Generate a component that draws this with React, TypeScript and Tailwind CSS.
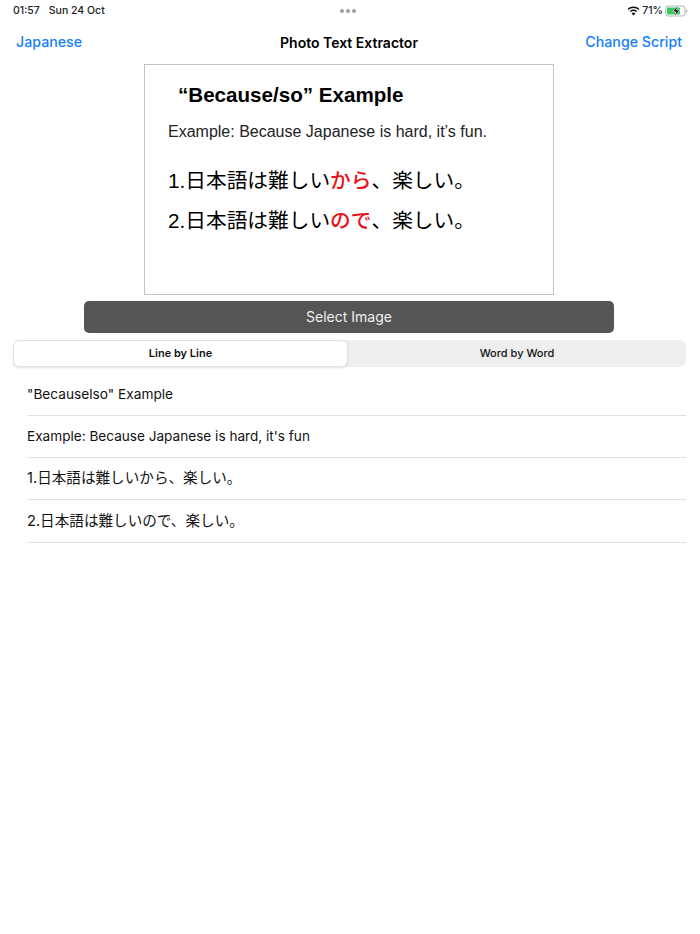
const sans = "font-['Inter','Noto_Sans_CJK_JP',sans-serif]";

function BatteryIcon() {
	return (
		<svg width="23" height="12" viewBox="0 0 23 12">
			<rect x="0.5" y="1" width="19.500" height="10" rx="2.500" fill="none" stroke="#b4b4b4" strokeWidth="1" />
			<rect x="2" y="2.500" width="13" height="7" rx="1" fill="#34c759" />
			<path d="M21 4.300c1 .3 1.500 1 1.500 1.700s-.5 1.400-1.500 1.700z" fill="#b4b4b4" />
			<path d="M12.600 0.600 7.600 6.800h3.200l-1.200 4.600 5.200-6.400h-3.200z" fill="#111" stroke="#fff" strokeWidth="0.600" />
		</svg>
	);
}

function WifiIcon() {
	return (
		<svg width="13" height="10" viewBox="0 0 13 10">
			<path d="M6.500 2.100c1.800 0 3.500.7 4.800 1.900l1-1.100C10.700 1.400 8.700.6 6.500.6S2.300 1.400.7 2.900l1 1.100C3 2.800 4.700 2.100 6.500 2.100z" fill="#111" />
			<path d="M6.500 4.900c1 0 2 .4 2.800 1.100l1-1.100C9.300 4 7.900 3.400 6.500 3.400S3.700 4 2.700 4.900l1 1.100c.8-.7 1.800-1.100 2.800-1.100z" fill="#111" />
			<path d="M6.500 9.500 8.400 7.400c-.5-.5-1.200-.8-1.900-.8s-1.400.3-1.900.8z" fill="#111" />
		</svg>
	);
}

const rows = [
	{ text: '"Becauselso" Example', size: "text-[13.700px]" },
	{ text: "Example: Because Japanese is hard, it's fun", size: "text-[13.600px]" },
	{ text: "1.日本語は難しいから、楽しい。", size: "pt-[1px] text-[14.600px]" },
	{ text: "2.日本語は難しいので、楽しい。", size: "pt-[2px] text-[14.600px]" },
];

export default function App() {
	return (
		<div className={`flex h-[934px] w-[700px] flex-col bg-white ${sans}`}>
			{/* Status bar */}
			<div className="relative flex h-[22px] items-center justify-between pl-[13px] pr-[12px] text-[10.500px] font-medium text-[#222]">
				<div className="flex gap-[9px]">
					<span>01:57</span>
					<span>Sun 24 Oct</span>
				</div>
				<div className="absolute left-[340px] top-[9px] flex gap-[2px]">
					<span className="h-[4px] w-[4px] rounded-full bg-[#a0a0a0]" />
					<span className="h-[4px] w-[4px] rounded-full bg-[#a0a0a0]" />
					<span className="h-[4px] w-[4px] rounded-full bg-[#a0a0a0]" />
				</div>
				<div className="flex items-center gap-[2px]">
					<WifiIcon />
					<span>71%</span>
					<BatteryIcon />
				</div>
			</div>

			{/* Nav bar */}
			<div className="mb-[2px] grid h-[40px] grid-cols-[1fr_auto_1fr] items-center pl-[16px] pr-[18px]">
				<button type="button" className="justify-self-start text-[14.200px] font-medium text-[#147efb]">
					Japanese
				</button>
				<h1 className="text-[14px] font-semibold text-black">Photo Text Extractor</h1>
				<button type="button" className="justify-self-end text-[14.200px] font-medium text-[#147efb]">
					Change Script
				</button>
			</div>

			{/* Picked photo */}
			<div className="ml-[144px] h-[231px] w-[410px] border border-[#c4c4c4] font-['Liberation_Sans','Noto_Sans_CJK_JP',sans-serif] text-black">
				<div className="pl-[33px] pt-[16px] text-[20.600px] font-bold leading-[28px]">“Because/so” Example</div>
				<div className="pl-[23px] pt-[12px] text-[16px] leading-[22px] text-[#222]">Example: Because Japanese is hard, it’s fun.</div>
				<div className="pl-[23px] pt-[23px] text-[20.700px] leading-[30px]">
					1.日本語は難しい<span className="font-medium text-[#e8141c]">から</span>、楽しい。
				</div>
				<div className="pl-[23px] pt-[10px] text-[20.700px] leading-[30px]">
					2.日本語は難しい<span className="font-medium text-[#e8141c]">ので</span>、楽しい。
				</div>
			</div>

			<button
				type="button"
				className="ml-[84px] mt-[6px] h-[32px] w-[530px] rounded-[5px] bg-[#555555] pb-[2px] text-[14px] text-[#f0f0f0]"
			>
				Select Image
			</button>

			{/* Segmented control */}
			<div className="ml-[13px] mt-[7px] flex h-[27px] w-[673px] rounded-[7px] bg-[#eeeeee] text-[11px] text-[#111]">
				<div className="flex w-[335px] items-center justify-center rounded-[6px] border border-[#e2e2e2] bg-white font-semibold shadow-[0_1px_2px_rgba(0,0,0,0.12)]">
					Line by Line
				</div>
				<div className="flex flex-1 items-center justify-center font-medium">Word by Word</div>
			</div>

			{/* Extracted lines */}
			<ul className="ml-[27px] mr-[14px] mt-[6.300px] text-[#111]">
				{rows.map((row) => (
					<li key={row.text} className={`flex h-[42.350px] items-center border-b border-[#e2e2e2] ${row.size}`}>
						{row.text}
					</li>
				))}
			</ul>
		</div>
	);
}
